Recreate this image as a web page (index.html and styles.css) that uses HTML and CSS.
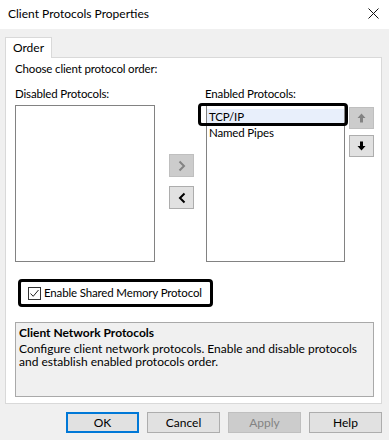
FILE: index.html
```html
<!DOCTYPE html>
<html>
<head>
<meta charset="utf-8">
<link rel="stylesheet" href="styles.css">
</head>
<body>
<div class="window">
  <div class="titlebar">
    <span class="title">Client Protocols Properties</span>
    <svg class="close" width="11" height="11" viewBox="0 0 11 11"><path d="M0.5 0.5L10.5 10.5M10.5 0.5L0.5 10.5" stroke="#111" stroke-width="1"/></svg>
  </div>
  <div class="body">
    <div class="tabs"><div class="tab">Order</div></div>
    <div class="panel">
      <div class="intro">Choose client protocol order:</div>
      <div class="lists">
        <div class="col col-dis">
          <div class="label">Disabled Protocols:</div>
          <div class="listbox"></div>
        </div>
        <div class="mid">
          <div class="sq sq-off"><svg width="8" height="12" viewBox="0 0 8 12"><path d="M1.5 1.5L6 6L1.5 10.5" fill="none" stroke="#838383" stroke-width="2"/></svg></div>
          <div class="sq"><svg width="8" height="12" viewBox="0 0 8 12"><path d="M6.5 1.5L2 6L6.5 10.5" fill="none" stroke="#000" stroke-width="2"/></svg></div>
        </div>
        <div class="col col-en">
          <div class="label">Enabled Protocols:</div>
          <div class="listbox listbox-en">
            <div class="item item-sel">TCP/IP</div>
            <div class="item">Named Pipes</div>
            <div class="mark mark-item"></div>
          </div>
        </div>
        <div class="side">
          <div class="sq sq-off sq-sm"><svg width="9" height="10" viewBox="0 0 9 10"><path d="M4.5 0.5L8.5 5H6V9.5H3V5H0.5Z" fill="#838383"/></svg></div>
          <div class="sq sq-sm"><svg width="9" height="10" viewBox="0 0 9 10"><path d="M4.5 9.5L8.5 5H6V0.5H3V5H0.5Z" fill="#000"/></svg></div>
        </div>
      </div>
      <div class="mark mark-check">
        <span class="checkbox"><svg width="11" height="11" viewBox="0 0 11 11"><path d="M1.5 5.5L4.2 8.3L9.5 2" fill="none" stroke="#222" stroke-width="1"/></svg></span>
        <span class="check-label">Enable Shared Memory Protocol</span>
      </div>
      <div class="info">
        <div class="info-title">Client Network Protocols</div>
        <div class="info-text">Configure client network protocols. Enable and disable protocols and establish enabled protocols order.</div>
      </div>
    </div>
    <div class="buttons">
      <div class="btn btn-def">OK</div>
      <div class="btn">Cancel</div>
      <div class="btn btn-off">Apply</div>
      <div class="btn">Help</div>
    </div>
  </div>
</div>
</body>
</html>
```
FILE: styles.css
```css
* { box-sizing: border-box; }
html, body { margin: 0; padding: 0; }
body {
  width: 389px;
  height: 440px;
  background: #f0f0f0;
  font-family: "Lato", "Noto Sans", sans-serif;
  font-size: 12px;
  color: #000;
  overflow: hidden;
}
.window { width: 389px; height: 440px; display: flex; flex-direction: column; }
.titlebar {
  height: 29px;
  background: #fff;
  display: flex;
  align-items: center;
  justify-content: space-between;
  padding: 0 10px 2px 8px;
}
.title { font-size: 12px; }
.close { display: block; }
.body { display: flex; flex-direction: column; }
.tabs { padding: 8px 0 0 5px; display: flex; }
.tab {
  width: 47px;
  height: 21px;
  background: #fff;
  border: 1px solid #d9d9d9;
  border-bottom: none;
  margin-bottom: -1px;
  position: relative;
  z-index: 1;
  padding: 2px 0 0 7px;
  line-height: 16px;
}
.panel {
  margin: 0 7px 0 5px;
  height: 347px;
  background: #fff;
  border: 1px solid #d9d9d9;
  padding: 3px 0 0 9px;
  display: flex;
  flex-direction: column;
}
.intro, .label, .item, .check-label {
  font-size: 11.5px;
  letter-spacing: -0.15px;
}
.intro { line-height: 16px; height: 16px; }
.lists { display: flex; margin-top: 9px; }
.col { display: flex; flex-direction: column; }
.label { height: 19px; line-height: 16px; }
.listbox {
  border: 1px solid #828282;
  background: #fff;
  height: 157px;
  position: relative;
}
.col-dis .listbox { width: 140px; }
.col-en { margin-left: 11px; }
.col-en .listbox { width: 139px; margin-left: 1px; padding-top: 3px; }
.item { height: 16px; line-height: 16px; padding-left: 2px; white-space: nowrap; }
.item-sel { background: #e8effb; }
.mid {
  margin-left: 14px;
  padding-top: 68px;
  display: flex;
  flex-direction: column;
  gap: 9px;
}
.side {
  margin-left: 4px;
  padding-top: 21px;
  display: flex;
  flex-direction: column;
  gap: 6px;
}
.sq {
  width: 25px;
  height: 23px;
  background: #e1e1e1;
  border: 1px solid #adadad;
  display: flex;
  align-items: center;
  justify-content: center;
}
.sq-sm { height: 22px; }
.sq-off { background: #cccccc; border-color: #bfbfbf; }
.sq svg { display: block; }
.mark {
  border: 3px solid #000;
  border-radius: 4px;
}
.mark-item {
  position: absolute;
  left: -9px;
  top: -3px;
  width: 150px;
  height: 23px;
}
.mark-check {
  margin: 17px 0 0 3px;
  width: 195px;
  height: 28px;
  display: flex;
  align-items: center;
  padding-left: 7px;
  gap: 3px;
}
.checkbox {
  flex: none;
  width: 13px;
  height: 13px;
  border: 1px solid #333;
  background: #fff;
  display: flex;
  align-items: center;
  justify-content: center;
}
.checkbox svg { display: block; }
.check-label { line-height: 16px; white-space: nowrap; }
.info {
  margin-top: 15px;
  width: 359px;
  height: 75px;
  background: #f0f0f0;
  border: 1px solid #a9a9a9;
  padding: 2px 3px 0 3px;
}
.info-title { font-weight: bold; line-height: 16px; margin-bottom: 1px; }
.info-text { line-height: 13px; }
.buttons {
  display: flex;
  justify-content: flex-end;
  gap: 8px;
  padding: 8px 7px 0 0;
}
.btn {
  width: 73px;
  height: 21px;
  background: #e1e1e1;
  border: 1px solid #adadad;
  display: flex;
  align-items: center;
  justify-content: center;
}
.btn-def { border: 2px solid #0078d7; }
.btn-off { background: #cccccc; border-color: #bfbfbf; color: #838383; }
```
